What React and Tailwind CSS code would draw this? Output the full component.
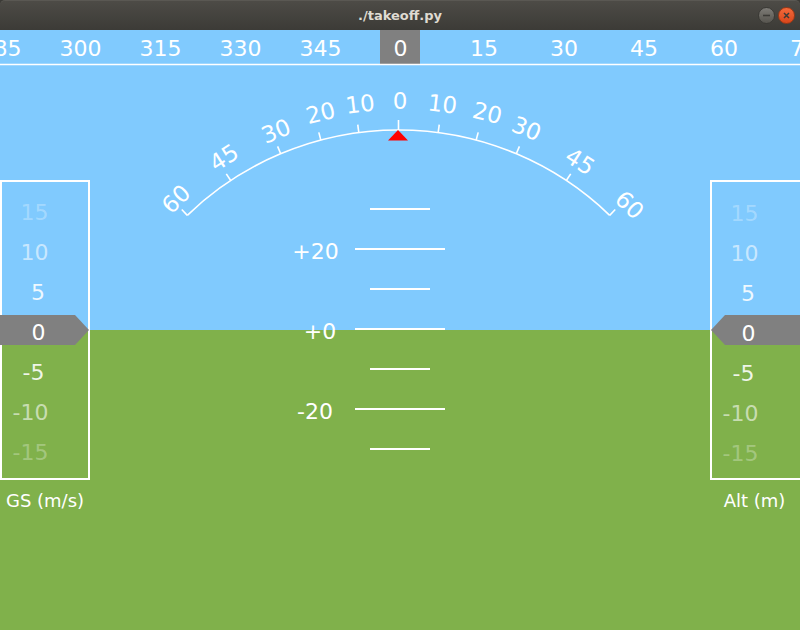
import React from 'react';

const FONT = { fontFamily: '"DejaVu Sans", "Liberation Sans", sans-serif' };

// roll arc geometry (screen coords)
const CX = 398.5;
const CY = 434;
const R = 304;

const polar = (deg, r) => {
    const a = (deg * Math.PI) / 180;
    return [CX + r * Math.sin(a), CY - r * Math.cos(a)];
};

// tick angle on the arc, label centre and label rotation
const rollTicks = [
    { v: '60', a: -44, x: 176, y: 199, rot: -43.6 },
    { v: '45', a: -33.5, x: 224, y: 157.5, rot: -32.8 },
    { v: '30', a: -22.8, x: 276, y: 131, rot: -22.2 },
    { v: '20', a: -14.8, x: 320.5, y: 113, rot: -13.9 },
    { v: '10', a: -7.5, x: 360, y: 104, rot: -6.8 },
    { v: '0', a: 0, x: 400, y: 101, rot: 0 },
    { v: '10', a: 7.5, x: 442.5, y: 104, rot: 6.8 },
    { v: '20', a: 14.8, x: 487.5, y: 113, rot: 13.9 },
    { v: '30', a: 22.8, x: 526.5, y: 128.5, rot: 22.2 },
    { v: '45', a: 33.5, x: 580, y: 161.5, rot: 32.8 },
    { v: '60', a: 44, x: 629.5, y: 205, rot: 43.6 },
];

const headings = [285, 300, 315, 330, 345, 0, 15, 30, 45, 60, 75];

const ladder = [
    { y: 209, long: false },
    { y: 249, long: true },
    { y: 289, long: false },
    { y: 329, long: true },
    { y: 369, long: false },
    { y: 409, long: true },
    { y: 449, long: false },
];

const tapeMarks = [
    { t: '15', x: 34.5, y: 212, o: 0.3 },
    { t: '10', x: 34.5, y: 252, o: 0.58 },
    { t: '5', x: 38, y: 292, o: 0.88 },
    { t: '-5', x: 33.5, y: 372, o: 0.88 },
    { t: '-10', x: 30.5, y: 412, o: 0.58 },
    { t: '-15', x: 30.5, y: 452, o: 0.3 },
];

const Tape = ({ dx, dy, right, label, labelX }) => (
    <g>
        {right ? (
            <rect x={711} y={181} width={100} height={298} fill="none" stroke="white" strokeWidth={2} />
        ) : (
            <rect x={1} y={181} width={88} height={298} fill="none" stroke="white" strokeWidth={2} />
        )}
        {tapeMarks.map((m) => (
            <text key={m.t} x={m.x + dx} y={m.y + dy} fill="white" fillOpacity={m.o} fontSize={22}
                textAnchor="middle" dominantBaseline="central">{m.t}</text>
        ))}
        {right ? (
            <polygon points="711,330 725,315 800,315 800,345 725,345" fill="#808080" />
        ) : (
            <polygon points="0,315 75,315 89,330 75,345 0,345" fill="#808080" />
        )}
        <text x={38.5 + dx} y={332 + dy} fill="white" fontSize={22} textAnchor="middle" dominantBaseline="central">0</text>
        <text x={labelX} y={500} fill="white" fontSize={18} textAnchor="middle" dominantBaseline="central">{label}</text>
    </g>
);

const Instrument = () => {
    const [sx, sy] = polar(-44, R);
    const [ex, ey] = polar(44, R);
    return (
        <svg className="absolute inset-0" width="800" height="600" viewBox="0 30 800 600" style={FONT}>
            {/* heading tape */}
            <rect x={380} y={30} width={40} height={34} fill="#808080" />
            {headings.map((h, i) => {
                // two-digit values carry a leading pad space
                const off = h > 0 && h < 100 ? 3.5 : 0;
                return (
                    <text key={i} x={0.5 + i * 80 + off} y={48} fill="white" fontSize={22}
                        textAnchor="middle" dominantBaseline="central">{h}</text>
                );
            })}
            <line x1={0} y1={64.5} x2={800} y2={64.5} stroke="white" strokeWidth={1.5} />

            {/* roll arc */}
            <path d={`M ${sx} ${sy} A ${R} ${R} 0 0 1 ${ex} ${ey}`} fill="none" stroke="white" strokeWidth={1.6} />
            {rollTicks.map((t, i) => {
                const [x1, y1] = polar(t.a, R);
                const [x2, y2] = polar(t.a, R + (t.v === '0' ? 10 : 8));
                return (
                    <g key={i}>
                        <line x1={x1} y1={y1} x2={x2} y2={y2} stroke="white" strokeWidth={1.6} />
                        <text x={t.x} y={t.y} fill="white" fontSize={23} textAnchor="middle"
                            dominantBaseline="central" transform={`rotate(${t.rot} ${t.x} ${t.y})`}>{t.v}</text>
                    </g>
                );
            })}
            <polygon points="398,130 388,140.5 408,140.5" fill="#ff0000" />

            {/* pitch ladder */}
            {ladder.map((l) => (
                <line key={l.y} x1={l.long ? 355 : 370} y1={l.y} x2={l.long ? 445 : 430} y2={l.y}
                    stroke="white" strokeWidth={2} />
            ))}
            <text x={315.5} y={251} fill="white" fontSize={22} textAnchor="middle" dominantBaseline="central">+20</text>
            <text x={320} y={331} fill="white" fontSize={22} textAnchor="middle" dominantBaseline="central">+0</text>
            <text x={315} y={411} fill="white" fontSize={22} textAnchor="middle" dominantBaseline="central">-20</text>

            <Tape dx={0} dy={0} label="GS (m/s)" labelX={45} />
            <Tape dx={710} dy={1} right label="Alt (m)" labelX={754.5} />
        </svg>
    );
};

const App = () => {
    return (
        <div className="w-[800px] h-[630px] flex flex-col overflow-hidden bg-[#3c3b37]">
            <div className="relative h-[30px] shrink-0 flex items-center justify-center rounded-t-[5px] bg-gradient-to-b from-[#4d4b46] to-[#3c3b37] border-t border-[#5a5853]">
                <span className="text-[13px] font-bold text-[#dfdbd2]" style={FONT}>./takeoff.py</span>
                <div className="absolute right-[5px] top-[6px] flex gap-[3px]">
                    <button className="w-[17px] h-[17px] rounded-full bg-gradient-to-b from-[#7d7b76] to-[#57554f] border border-[#3a3935] flex items-center justify-center">
                        <svg width="9" height="9" viewBox="0 0 9 9"><line x1="1" y1="4.5" x2="8" y2="4.5" stroke="#3c3b37" strokeWidth="1.6" /></svg>
                    </button>
                    <button className="w-[17px] h-[17px] rounded-full bg-gradient-to-b from-[#f4693a] to-[#d9461a] border border-[#9e3815] flex items-center justify-center">
                        <svg width="9" height="9" viewBox="0 0 9 9"><path d="M2 2 L7 7 M7 2 L2 7" stroke="#3c3b37" strokeWidth="1.5" /></svg>
                    </button>
                </div>
            </div>
            <div className="relative flex-1 flex flex-col">
                <div className="h-[300px] bg-[#80cafe]" />
                <div className="flex-1 bg-[#80b14b]" />
                <Instrument />
            </div>
        </div>
    );
};

export default App;
